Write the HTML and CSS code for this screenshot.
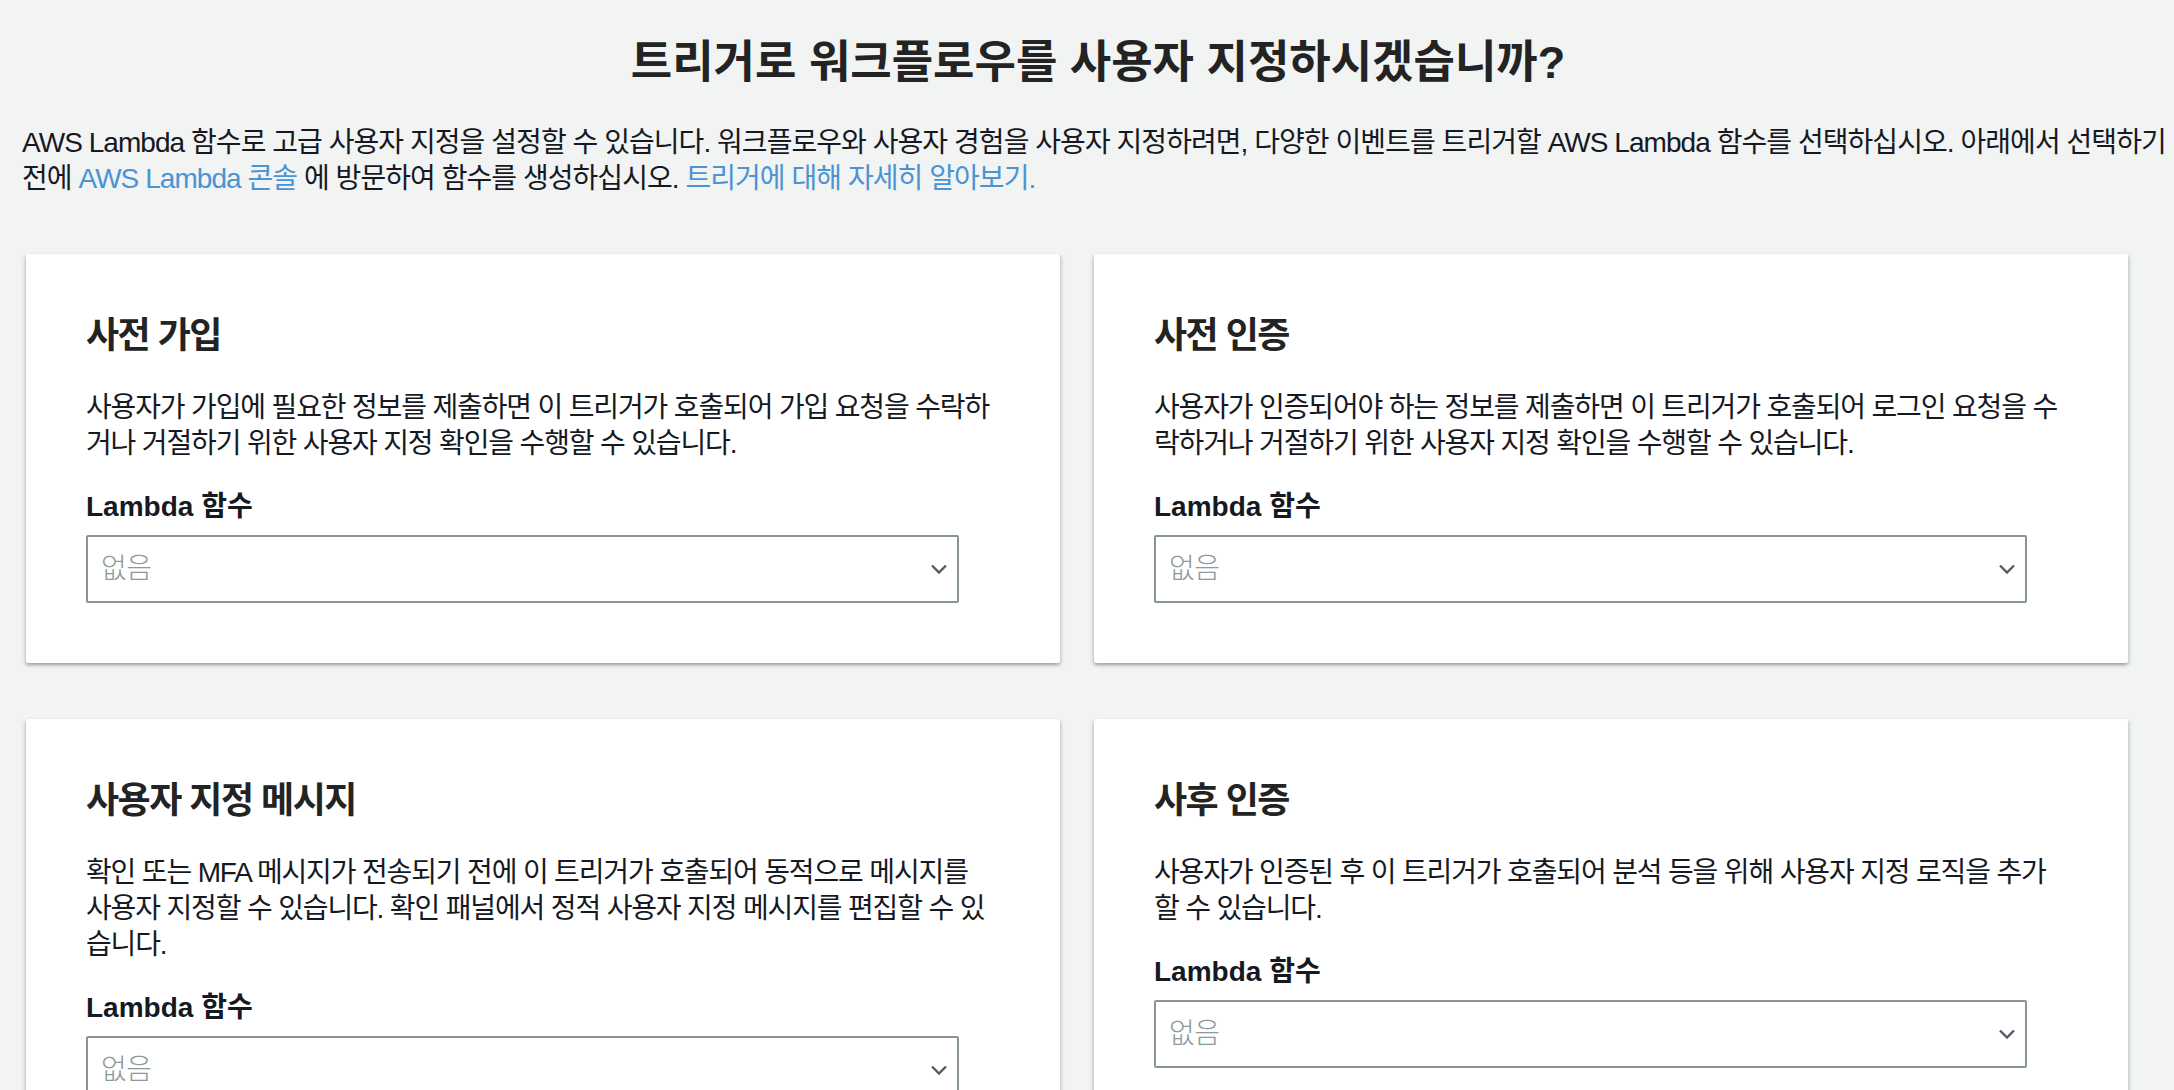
FILE: index.html
```html
<!DOCTYPE html>
<html lang="ko">
<head>
<meta charset="utf-8">
<title>트리거로 워크플로우를 사용자 지정하시겠습니까?</title>
<link rel="stylesheet" href="styles.css">
</head>
<body>
<main class="page">
  <h1 class="page-title">트리거로 워크플로우를 사용자 지정하시겠습니까?</h1>
  <p class="intro">AWS Lambda 함수로 고급 사용자 지정을 설정할 수 있습니다. 워크플로우와 사용자 경험을 사용자 지정하려면, 다양한 이벤트를 트리거할 AWS Lambda 함수를 선택하십시오. 아래에서 선택하기<br>전에 <a class="link" href="#">AWS Lambda 콘솔</a> 에 방문하여 함수를 생성하십시오. <a class="link" href="#">트리거에 대해 자세히 알아보기.</a></p>

  <section class="grid">
    <div class="card">
      <h2 class="card-title">사전 가입</h2>
      <p class="card-desc">사용자가 가입에 필요한 정보를 제출하면 이 트리거가 호출되어 가입 요청을 수락하<br>거나 거절하기 위한 사용자 지정 확인을 수행할 수 있습니다.</p>
      <div class="field-label">Lambda 함수</div>
      <div class="select"><span class="select-value">없음</span><svg class="chev" width="16" height="10" viewBox="0 0 16 10"><path d="M1 1.5 L8 8.5 L15 1.5" fill="none" stroke="#545b64" stroke-width="2.4"/></svg></div>
    </div>
    <div class="card">
      <h2 class="card-title">사전 인증</h2>
      <p class="card-desc">사용자가 인증되어야 하는 정보를 제출하면 이 트리거가 호출되어 로그인 요청을 수<br>락하거나 거절하기 위한 사용자 지정 확인을 수행할 수 있습니다.</p>
      <div class="field-label">Lambda 함수</div>
      <div class="select"><span class="select-value">없음</span><svg class="chev" width="16" height="10" viewBox="0 0 16 10"><path d="M1 1.5 L8 8.5 L15 1.5" fill="none" stroke="#545b64" stroke-width="2.4"/></svg></div>
    </div>
    <div class="card">
      <h2 class="card-title">사용자 지정 메시지</h2>
      <p class="card-desc">확인 또는 MFA 메시지가 전송되기 전에 이 트리거가 호출되어 동적으로 메시지를<br>사용자 지정할 수 있습니다. 확인 패널에서 정적 사용자 지정 메시지를 편집할 수 있<br>습니다.</p>
      <div class="field-label">Lambda 함수</div>
      <div class="select"><span class="select-value">없음</span><svg class="chev" width="16" height="10" viewBox="0 0 16 10"><path d="M1 1.5 L8 8.5 L15 1.5" fill="none" stroke="#545b64" stroke-width="2.4"/></svg></div>
    </div>
    <div class="card">
      <h2 class="card-title">사후 인증</h2>
      <p class="card-desc">사용자가 인증된 후 이 트리거가 호출되어 분석 등을 위해 사용자 지정 로직을 추가<br>할 수 있습니다.</p>
      <div class="field-label">Lambda 함수</div>
      <div class="select"><span class="select-value">없음</span><svg class="chev" width="16" height="10" viewBox="0 0 16 10"><path d="M1 1.5 L8 8.5 L15 1.5" fill="none" stroke="#545b64" stroke-width="2.4"/></svg></div>
    </div>
  </section>
</main>
</body>
</html>
```

FILE: styles.css
```css
html, body {
  margin: 0;
  padding: 0;
  background: #f2f3f3;
  overflow: hidden;
}

body {
  font-family: "Liberation Sans", "Noto Sans CJK KR", sans-serif;
  color: #16191f;
  font-size: 28px;
  line-height: 36px;
}

.page {
  padding: 36px 0 0 22px;
}

.page-title {
  margin: 0 0 36px;
  font-size: 45px;
  line-height: 53px;
  font-weight: 700;
  text-align: center;
  color: #232323;
}

.intro {
  margin: 0;
  white-space: nowrap;
  letter-spacing: -0.95px;
}

.link {
  color: #4b93d2;
  text-decoration: none;
}

.grid {
  display: grid;
  grid-template-columns: repeat(2, 1034px);
  column-gap: 34px;
  row-gap: 56px;
  margin: 57px 0 0 4px;
}

.card {
  background: #ffffff;
  border-radius: 2px;
  padding: 60px;
  box-shadow: 0 2px 3px 0 rgba(0, 28, 36, 0.22), 2px 2px 4px 0 rgba(0, 28, 36, 0.1), -2px 2px 4px 0 rgba(0, 28, 36, 0.1);
}

.card-title {
  margin: 0 0 32px;
  font-size: 36px;
  line-height: 44px;
  font-weight: 700;
  letter-spacing: -1.5px;
  color: #232323;
}

.card-desc {
  margin: 0 0 27px;
  white-space: nowrap;
  letter-spacing: -1.15px;
}

.field-label {
  font-weight: 700;
  margin-bottom: 10px;
}

.select {
  width: 873px;
  height: 68px;
  box-sizing: border-box;
  border: 2px solid #879596;
  border-radius: 2px;
  display: flex;
  align-items: center;
  justify-content: space-between;
  padding: 0 10px 0 13px;
  background: #ffffff;
}

.select-value {
  color: #8d9a9b;
  font-weight: 300;
  letter-spacing: -0.5px;
}

.chev {
  display: block;
}
```
